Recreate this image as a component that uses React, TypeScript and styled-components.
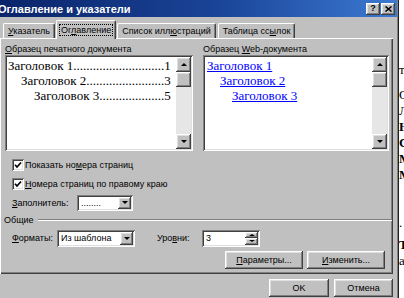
import React from 'react';
import styled, { createGlobalStyle, css } from 'styled-components';

const GlobalStyle = createGlobalStyle`
  html, body {
    margin: 0;
    padding: 0;
    background: #fff;
  }
  body {
    font-family: "Liberation Sans", Arial, sans-serif;
    font-size: 9px;
    color: #000;
  }
  * { box-sizing: border-box; }
`;

const raised = css`
  box-shadow: inset -1px -1px #404040, inset 1px 1px #fff, inset -2px -2px #808080, inset 2px 2px #dfdfdf;
`;
const sunken = css`
  box-shadow: inset 1px 1px #808080, inset -1px -1px #fff, inset 2px 2px #404040, inset -2px -2px #dfdfdf;
`;

const Screen = styled.div`
  display: flex;
  width: 404px;
  height: 298px;
  overflow: hidden;
`;

const Dialog = styled.div`
  width: 399px;
  flex-shrink: 0;
  background: #c0c0c0;
  border-right: 1px solid #202020;
  box-shadow: inset -1px 0 #808080;
  display: flex;
  flex-direction: column;
`;

const TitleBar = styled.div`
  height: 17px;
  margin-right: 1px;
  background: linear-gradient(90deg, #0a246a 0%, #1a4498 55%, #3c7ad2 100%);
  display: flex;
  align-items: center;
  justify-content: space-between;
  padding-right: 2px;
`;

const Title = styled.span`
  color: #fff;
  font-weight: 700;
  font-size: 11px;
  margin-left: -2px;
  white-space: nowrap;
`;

const CaptionButtons = styled.div`
  display: flex;
  gap: 1px;
`;

const CaptionButton = styled.div`
  width: 14px;
  height: 12px;
  background: #c0c0c0;
  ${raised};
  display: flex;
  align-items: center;
  justify-content: center;
  font-weight: 700;
  font-size: 9px;
  line-height: 1;
`;

const Content = styled.div`
  flex: 1;
  display: flex;
  flex-direction: column;
  padding: 3px 5px 0 0;
`;

const TabRow = styled.div`
  display: flex;
  align-items: flex-end;
  height: 18px;
  padding-left: 2px;
  position: relative;
  z-index: 1;
`;

const Tab = styled.div<{ $active?: boolean }>`
  height: ${p => (p.$active ? 19 : 15)}px;
  padding: 0 ${p => (p.$active ? 3 : 4)}px;
  margin: 0 ${p => (p.$active ? 0 : 1)}px ${p => (p.$active ? -1 : 0)}px;
  background: #c0c0c0;
  border-top: 1px solid #fff;
  border-left: 1px solid #fff;
  border-right: 1px solid #404040;
  border-radius: 2px 2px 0 0;
  box-shadow: inset -1px 0 #808080;
  display: flex;
  align-items: center;
  white-space: nowrap;
`;

const FocusLabel = styled.span`
  outline: 1px dotted #000;
  padding: 0 1px;
`;

const Acc = styled.span`
  text-decoration: underline;
`;

const Panel = styled.div`
  height: 236px;
  background: #c0c0c0;
  box-shadow: inset 1px 1px #fff, inset -1px -1px #404040, inset -2px -2px #808080;
  padding: 6px 4px 5px 5px;
  display: flex;
  flex-direction: column;
`;

const Samples = styled.div`
  display: grid;
  grid-template-columns: 188px 186px;
  column-gap: 10px;
  margin-bottom: 4px;
`;

const SampleLabel = styled.div`
  height: 11px;
  line-height: 11px;
  white-space: nowrap;
`;

const SampleBox = styled.div`
  height: 96px;
  background: #fff;
  ${sunken};
  padding: 2px;
  display: flex;
`;

const SampleText = styled.div`
  flex: 1;
  padding: 1px 0 0 0;
  font-family: "Liberation Serif", "Times New Roman", serif;
  font-size: 13px;
`;

const TocRow = styled.div<{ $indent: number }>`
  height: 15px;
  line-height: 15px;
  padding-left: ${p => p.$indent}px;
  white-space: nowrap;
`;

const LinkRow = styled.div<{ $indent: number }>`
  height: 15px;
  line-height: 15px;
  padding-left: ${p => p.$indent}px;
  color: #0000ff;
  text-decoration: underline;
  white-space: nowrap;
`;

const ScrollBar = styled.div`
  width: 15px;
  display: flex;
  flex-direction: column;
  background: #e6e6e6;
`;

const ScrollButton = styled.div`
  width: 15px;
  height: 15px;
  background: #c0c0c0;
  ${raised};
  display: flex;
  align-items: center;
  justify-content: center;
`;

const ScrollTrack = styled.div`
  flex: 1;
`;

const Arrow = styled.span<{ $dir: 'up' | 'down'; $size?: number }>`
  width: 0;
  height: 0;
  border-left: ${p => p.$size ?? 3.5}px solid transparent;
  border-right: ${p => p.$size ?? 3.5}px solid transparent;
  ${p =>
    p.$dir === 'up'
      ? css`border-bottom: ${(p.$size ?? 3.5) - 0.5}px solid #000;`
      : css`border-top: ${(p.$size ?? 3.5) - 0.5}px solid #000;`}
`;

const CheckRow = styled.div`
  height: 19px;
  display: flex;
  align-items: center;
  padding-left: 7px;
  gap: 1px;
  white-space: nowrap;
`;

const CheckBox = styled.div`
  width: 12px;
  height: 12px;
  background: #fff;
  ${sunken};
  display: flex;
  align-items: center;
  justify-content: center;
`;

const FieldRow = styled.div<{ $h: number; $mt?: number }>`
  height: ${p => p.$h}px;
  margin-top: ${p => p.$mt ?? 0}px;
  display: flex;
  align-items: center;
  padding-left: 7px;
  white-space: nowrap;
`;

const FieldLabel = styled.span<{ $w: number; $ml?: number }>`
  width: ${p => p.$w}px;
  margin-left: ${p => p.$ml ?? 0}px;
  flex-shrink: 0;
`;

const Combo = styled.div<{ $w: number; $h?: number }>`
  width: ${p => p.$w}px;
  height: ${p => p.$h ?? 16}px;
  background: #fff;
  ${sunken};
  padding: 2px;
  display: flex;
  align-items: stretch;
`;

const ComboText = styled.span`
  flex: 1;
  padding-left: 2px;
  display: flex;
  align-items: center;
`;

const SideButton = styled.div`
  width: 13px;
  background: #c0c0c0;
  ${raised};
  display: flex;
  align-items: center;
  justify-content: center;
`;

const SpinButtons = styled.div`
  width: 13px;
  display: flex;
  flex-direction: column;
`;

const SpinHalf = styled(SideButton)`
  flex: 1;
`;

const GroupHeader = styled.div`
  height: 16px;
  display: flex;
  align-items: center;
  gap: 4px;
  margin-left: -1px;
  margin-right: -3px;
`;

const EtchedLine = styled.div`
  flex: 1;
  height: 2px;
  border-top: 1px solid #808080;
  border-bottom: 1px solid #fff;
`;

const ButtonRow = styled.div`
  display: flex;
  justify-content: flex-end;
  gap: 4px;
  margin-top: 4px;
  padding-right: 4px;
`;

const Button = styled.div<{ $w: number }>`
  width: ${p => p.$w}px;
  height: 18px;
  background: #c0c0c0;
  ${raised};
  display: flex;
  align-items: center;
  justify-content: center;
  white-space: nowrap;
`;

const Footer = styled.div`
  display: flex;
  justify-content: flex-end;
  gap: 5px;
  padding-top: 5px;
`;

const DocStrip = styled.div`
  flex: 1;
  overflow: hidden;
  background: #fff;
  padding-top: 62px;
  font-family: "Liberation Serif", "Times New Roman", serif;
  font-size: 13px;
  white-space: nowrap;
`;

const DocLine = styled.div<{ $bold?: boolean; $gap?: number }>`
  height: 16px;
  line-height: 16px;
  margin-top: ${p => p.$gap ?? 0}px;
  font-weight: ${p => (p.$bold ? 700 : 400)};
`;

const Check = () => (
  <svg width="8" height="8" viewBox="0 0 8 8">
    <polyline points="1,3.8 3,6 7,1.5" fill="none" stroke="#000" strokeWidth="1.7" />
  </svg>
);

const CloseGlyph = () => (
  <svg width="7" height="6" viewBox="0 0 7 6">
    <path d="M0.5 0.5 L6.5 5.5 M6.5 0.5 L0.5 5.5" stroke="#000" strokeWidth="1.5" />
  </svg>
);

const Scroll = () => (
  <ScrollBar>
    <ScrollButton><Arrow $dir="up" /></ScrollButton>
    <ScrollButton />
    <ScrollTrack />
    <ScrollButton><Arrow $dir="down" /></ScrollButton>
  </ScrollBar>
);

const toc = [
  { name: 'Заголовок 1', page: '1', indent: 1, dots: 28 },
  { name: 'Заголовок 2', page: '3', indent: 14, dots: 24 },
  { name: 'Заголовок 3', page: '5', indent: 27, dots: 20 },
];

const links = [
  { name: 'Заголовок 1', indent: 2 },
  { name: 'Заголовок 2', indent: 15 },
  { name: 'Заголовок 3', indent: 27 },
];

const docLines = [
  { ch: 'т', gap: 0 },
  { ch: 'С', gap: 9 },
  { ch: 'Л' },
  { ch: 'Н', bold: true },
  { ch: 'С', bold: true },
  { ch: 'М', bold: true },
  { ch: 'М', bold: true },
  { ch: '' },
  { ch: '' },
  { ch: '.' },
  { ch: 'Т', bold: true, gap: 6 },
  { ch: 'а' },
  { ch: '', gap: 9 },
  { ch: 'к' },
];

export default function App() {
  return (
    <>
      <GlobalStyle />
      <Screen>
        <Dialog>
          <TitleBar>
            <Title>Оглавление и указатели</Title>
            <CaptionButtons>
              <CaptionButton>?</CaptionButton>
              <CaptionButton><CloseGlyph /></CaptionButton>
            </CaptionButtons>
          </TitleBar>
          <Content>
            <TabRow>
              <Tab><span><Acc>У</Acc>казатель</span></Tab>
              <Tab $active><FocusLabel>Ог<Acc>л</Acc>авление</FocusLabel></Tab>
              <Tab><span>Список илл<Acc>ю</Acc>страций</span></Tab>
              <Tab><span>Таблица сс<Acc>ы</Acc>лок</span></Tab>
            </TabRow>
            <Panel>
              <Samples>
                <div>
                  <SampleLabel><Acc>О</Acc>бразец печатного документа</SampleLabel>
                  <SampleBox>
                    <SampleText>
                      {toc.map(r => (
                        <TocRow key={r.name} $indent={r.indent}>
                          {r.name}{'.'.repeat(r.dots)}{r.page}
                        </TocRow>
                      ))}
                    </SampleText>
                    <Scroll />
                  </SampleBox>
                </div>
                <div>
                  <SampleLabel>Образец <Acc>W</Acc>eb-документа</SampleLabel>
                  <SampleBox>
                    <SampleText>
                      {links.map(r => (
                        <LinkRow key={r.name} $indent={r.indent}>{r.name}</LinkRow>
                      ))}
                    </SampleText>
                    <Scroll />
                  </SampleBox>
                </div>
              </Samples>
              <CheckRow>
                <CheckBox><Check /></CheckBox>
                <span>Показать но<Acc>м</Acc>ера страниц</span>
              </CheckRow>
              <CheckRow>
                <CheckBox><Check /></CheckBox>
                <span><Acc>Н</Acc>омера страниц по правому краю</span>
              </CheckRow>
              <FieldRow $h={19}>
                <FieldLabel $w={65}><Acc>З</Acc>аполнитель:</FieldLabel>
                <Combo $w={56}>
                  <ComboText>........</ComboText>
                  <SideButton><Arrow $dir="down" /></SideButton>
                </Combo>
              </FieldRow>
              <GroupHeader>
                <span>Общие</span>
                <EtchedLine />
              </GroupHeader>
              <FieldRow $h={18} $mt={1}>
                <FieldLabel $w={45}><Acc>Ф</Acc>орматы:</FieldLabel>
                <Combo $w={78} $h={17}>
                  <ComboText>Из шаблона</ComboText>
                  <SideButton><Arrow $dir="down" /></SideButton>
                </Combo>
                <FieldLabel $w={45} $ml={22}>Уро<Acc>в</Acc>ни:</FieldLabel>
                <Combo $w={58} $h={17}>
                  <ComboText>3</ComboText>
                  <SpinButtons>
                    <SpinHalf><Arrow $dir="up" $size={3} /></SpinHalf>
                    <SpinHalf><Arrow $dir="down" $size={3} /></SpinHalf>
                  </SpinButtons>
                </Combo>
              </FieldRow>
              <ButtonRow>
                <Button $w={78}><Acc>П</Acc>араметры...</Button>
                <Button $w={78}><Acc>И</Acc>зменить...</Button>
              </ButtonRow>
            </Panel>
            <Footer>
              <Button $w={60}>OK</Button>
              <Button $w={59}>Отмена</Button>
            </Footer>
          </Content>
        </Dialog>
        <DocStrip>
          {docLines.map((l, i) => (
            <DocLine key={i} $bold={l.bold} $gap={l.gap}>{l.ch || '\u00a0'}</DocLine>
          ))}
        </DocStrip>
      </Screen>
    </>
  );
}
